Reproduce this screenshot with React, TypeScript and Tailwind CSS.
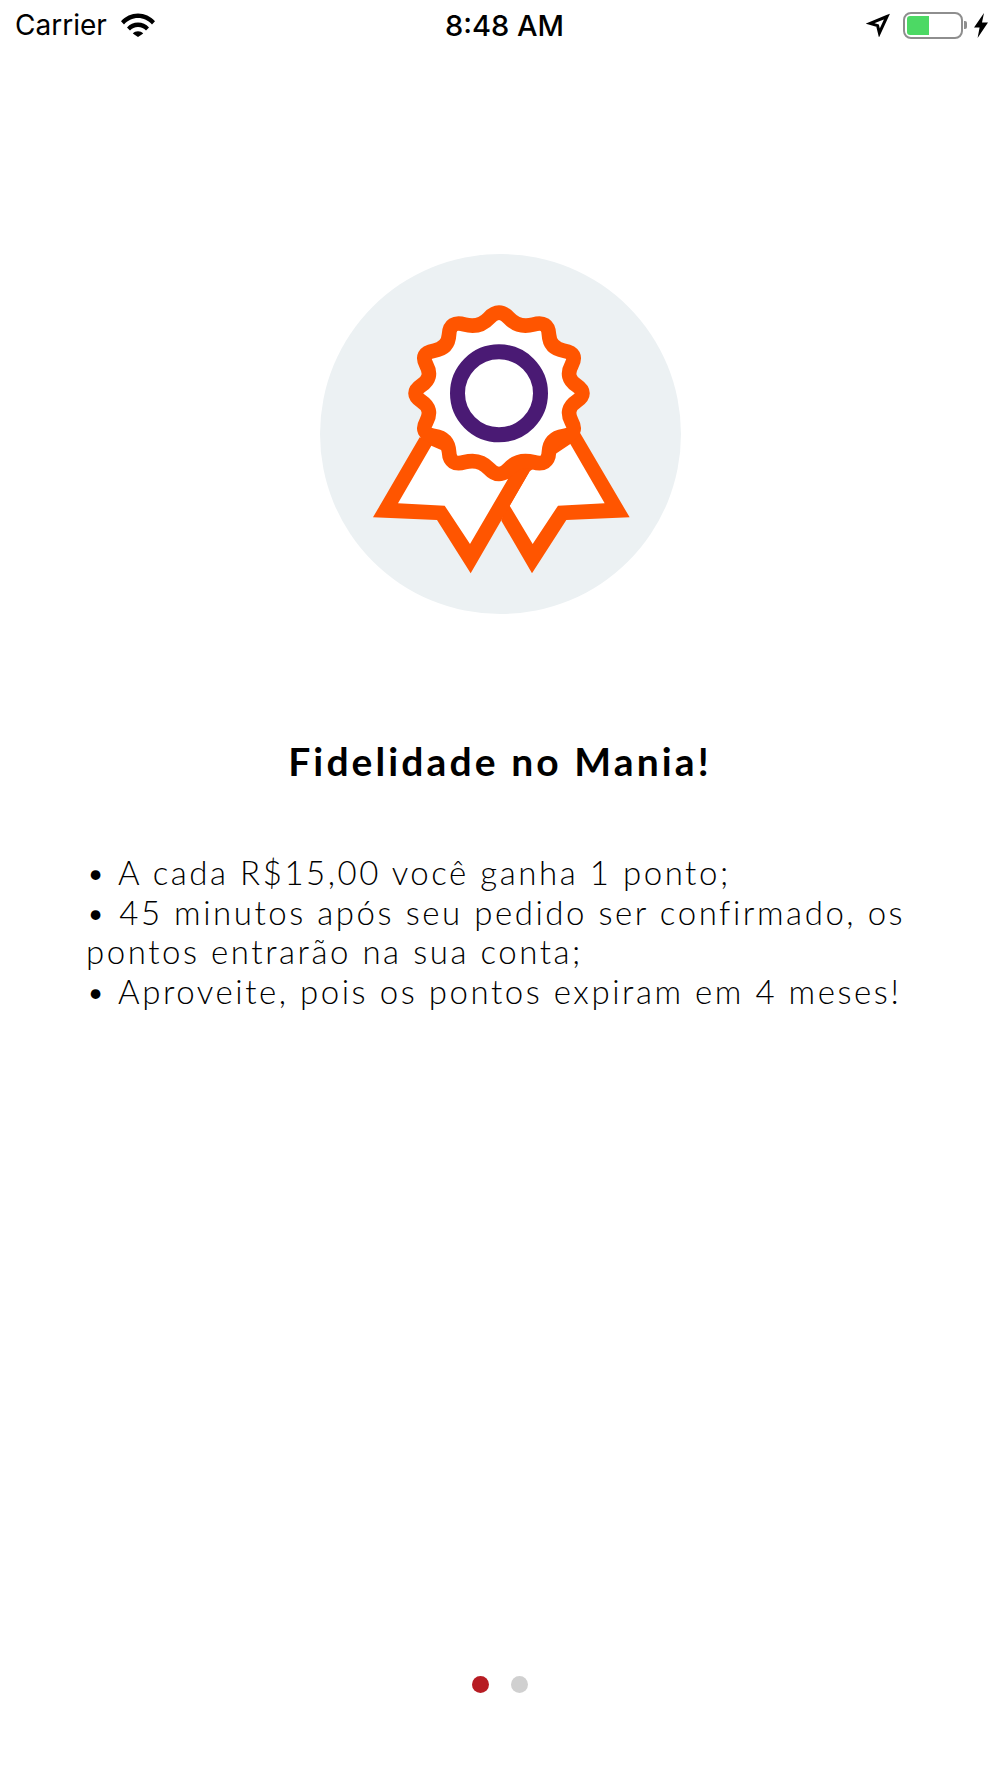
// Tela de onboarding: fidelidade
const CX = 568;
const CY = 428;

// pontas da roseta: as 12 não são bem regulares no desenho original
const PEAK_ANGLES = [0, 34, 63, 90, 117, 146, 180, 214, 243, 270, 297, 326];
const PEAK_RADII = [258, 264, 267, 268, 267, 264, 258, 264, 267, 268, 267, 264];
const VALLEY_RADIUS = 203;

function rosettePath() {
  const pts: [number, number][] = [];
  const polar = (deg: number, r: number): [number, number] => {
    const a = (deg - 90) * (Math.PI / 180);
    return [CX + r * Math.cos(a), CY + r * Math.sin(a)];
  };
  PEAK_ANGLES.forEach((deg, i) => {
    const nextDeg = i === 11 ? 360 : PEAK_ANGLES[i + 1];
    pts.push(polar(deg, PEAK_RADII[i]));
    pts.push(polar((deg + nextDeg) / 2, VALLEY_RADIUS));
  });
  const mid = (a: [number, number], b: [number, number]) =>
    `${((a[0] + b[0]) / 2).toFixed(1)} ${((a[1] + b[1]) / 2).toFixed(1)}`;
  let d = `M${mid(pts[23], pts[0])}`;
  pts.forEach((p, i) => {
    d += ` Q${p[0].toFixed(1)} ${p[1].toFixed(1)} ${mid(p, pts[(i + 1) % 24])}`;
  });
  return d + "Z";
}

function Badge() {
  return (
    <svg viewBox="1 -5 1140 1110" className="w-[380px] h-[370px] shrink-0">
      <path fill="#ff5500" d="M810 545L960 800L770 808L667 968L575 810L620 660Z" />
      <path fill="#fff" d="M660 662L782 580L885 758L745 765L669 880L600 765Z" />
      <path fill="#ff5500" d="M330 560L190 800L382 808L483 968L660 662Z" />
      <path fill="#fff" d="M365 585L265 758L405 765L481 880L595 685Z" />
      <path d={rosettePath()} fill="#fff" stroke="#ff5500" strokeWidth="44" strokeLinejoin="round" />
      <circle cx={CX} cy={CY} r="124.5" fill="#fff" stroke="#4a1a74" strokeWidth="45" />
    </svg>
  );
}

function WifiIcon() {
  return (
    <svg viewBox="0 0 34 24" className="w-[34px] h-[24px]">
      <path d="M0 8.2C4.4 3.4 10.4 0.5 17 0.5S29.6 3.4 34 8.2L31 11.4C27.4 7.4 22.5 4.9 17 4.9S6.6 7.4 3 11.4Z" />
      <path d="M6 14.4C8.8 11.4 12.7 9.5 17 9.5S25.2 11.4 28 14.4L25 17.6C23 15.4 20.2 14 17 14S11 15.4 9 17.6Z" />
      <path d="M11.8 20.4C13.1 19 15 18.2 17 18.2S20.9 19 22.2 20.4L17 24Z" />
    </svg>
  );
}

function StatusBar() {
  return (
    <div className="h-[50px] pl-[15px] pr-[12px] grid grid-cols-3 items-center text-black">
      <div className="flex items-center gap-[14px]">
        <span className="text-[28px] leading-none font-['Inter',sans-serif]">Carrier</span>
        <WifiIcon />
      </div>
      <div className="pl-[6px] text-center text-[29px] leading-none font-medium font-['Inter',sans-serif]">8:48 AM</div>
      <div className="flex items-center justify-end">
        <svg viewBox="0 0 24 24" className="w-[24px] h-[24px] mr-[13px]">
          <path d="M21 3.5L4 10.4L11.6 12.6L13.4 20Z" fill="none" stroke="#000" strokeWidth="3" strokeLinejoin="miter" />
        </svg>
        <div className="w-[60px] h-[27px] rounded-[8px] border-2 border-[#8e8e8e] p-[2px]">
          <div className="w-[22px] h-full rounded-l-[3px] bg-[#4cd964]" />
        </div>
        <div className="w-[3px] h-[8px] ml-[1px] rounded-r-[2px] bg-[#8e8e8e]" />
        <svg viewBox="0 0 14 25" className="w-[14px] h-[25px] ml-[7px]">
          <path d="M10 0L0 14.5H5.6L3.6 25L14 9.5H8Z" />
        </svg>
      </div>
    </div>
  );
}

export default function App() {
  return (
    <div className="w-[1000px] h-[1778px] bg-white flex flex-col items-stretch font-['Lato',sans-serif] text-black overflow-hidden">
      <StatusBar />
      <div className="mt-[204px] self-center w-[361px] h-[360px] rounded-full bg-[#ecf1f3] flex items-center justify-center">
        <Badge />
      </div>
      <h1 className="mt-[124px] text-center text-[39px] leading-[46px] font-bold tracking-[3.1px]">
        Fidelidade no Mania!
      </h1>
      <p className="mt-[69px] px-[86px] text-[33px] leading-[39.5px] font-light tracking-[2.55px]">
        • A cada R$15,00 você ganha 1 ponto;
        <br />
        • 45 minutos após seu pedido ser confirmado, os pontos entrarão na sua conta;
        <br />
        • Aproveite, pois os pontos expiram em 4 meses!
      </p>
      <div className="mt-auto mb-[85px] flex justify-center gap-[22px]">
        <span className="w-[17px] h-[17px] rounded-full bg-[#b71c23]" />
        <span className="w-[17px] h-[17px] rounded-full bg-[#d0d0d0]" />
      </div>
    </div>
  );
}
